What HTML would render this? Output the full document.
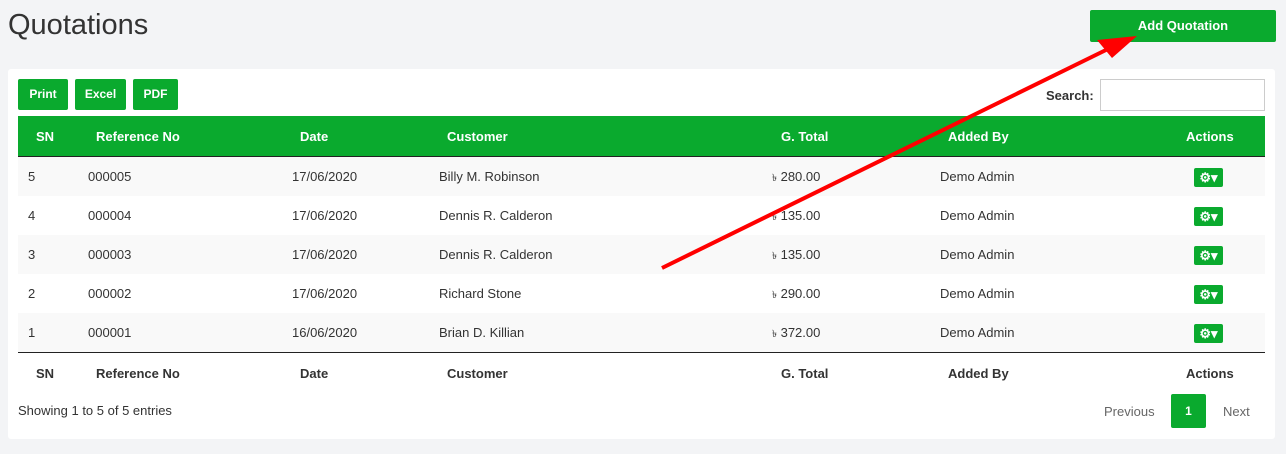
<!DOCTYPE html>
<html><head><style>
body{margin:0;width:1286px;height:454px;background:#f3f4f6;font-family:"Liberation Sans",sans-serif;position:relative;overflow:hidden;color:#333}
.a{position:absolute}
h1{position:absolute;left:8px;top:9px;margin:0;font-weight:normal;font-size:29px;color:#333}
.btn{position:absolute;background:#0aaa2e;color:#fff;font-size:12px;font-weight:bold;text-align:center;border-radius:2px}
.card{position:absolute;left:8px;top:69px;width:1267px;height:370px;background:#fff;border-radius:3px}
.hdr{position:absolute;left:18px;top:116px;width:1247px;height:40px;background:#0aaa2e;border-bottom:1px solid #222}
.t{position:absolute;font-size:13px;white-space:nowrap;line-height:15px}
.b{font-weight:bold}
.row{position:absolute;left:18px;width:1247px;height:39px}
.gear{position:absolute;left:1194px;width:29px;height:19px;background:#0aaa2e;border-radius:2px;color:#fff;font-size:13px;font-weight:bold;text-align:center;line-height:19px}
.tk{font-size:10px;line-height:10px;vertical-align:0}
</style></head><body>
<h1>Quotations</h1>
<div class="btn" style="left:1090px;top:10px;width:186px;height:32px;line-height:32px;font-size:13px">Add Quotation</div>
<div class="card"></div>
<div class="btn" style="left:18px;top:79px;width:50px;height:31px;line-height:31px">Print</div>
<div class="btn" style="left:75px;top:79px;width:51px;height:31px;line-height:31px">Excel</div>
<div class="btn" style="left:133px;top:79px;width:45px;height:31px;line-height:31px">PDF</div>
<div class="t b" style="left:1046px;top:88px">Search:</div>
<div class="a" style="left:1100px;top:79px;width:163px;height:30px;border:1px solid #ccc;background:#fff"></div>
<div class="hdr"></div>
<div class="row" style="top:157px;background:#f9f9f9"></div>
<div class="row" style="top:235px;background:#f9f9f9"></div>
<div class="row" style="top:313px;background:#f9f9f9"></div>
<div class="a" style="left:18px;top:352px;width:1247px;height:1px;background:#222"></div>
<div style="color:#fff">
<div class="t b" style="left:36px;top:129px">SN</div><div class="t b" style="left:96px;top:129px">Reference No</div><div class="t b" style="left:300px;top:129px">Date</div><div class="t b" style="left:447px;top:129px">Customer</div><div class="t b" style="left:781px;top:129px">G. Total</div><div class="t b" style="left:948px;top:129px">Added By</div><div class="t b" style="left:1186px;top:129px">Actions</div>
</div>
<div class="t b" style="left:36px;top:366px">SN</div><div class="t b" style="left:96px;top:366px">Reference No</div><div class="t b" style="left:300px;top:366px">Date</div><div class="t b" style="left:447px;top:366px">Customer</div><div class="t b" style="left:781px;top:366px">G. Total</div><div class="t b" style="left:948px;top:366px">Added By</div><div class="t b" style="left:1186px;top:366px">Actions</div>

<div class="t" style="left:28px;top:169px">5</div><div class="t" style="left:88px;top:169px">000005</div><div class="t" style="left:292px;top:169px">17/06/2020</div><div class="t" style="left:439px;top:169px">Billy M. Robinson</div><div class="t" style="left:772px;top:169px"><span class="tk">৳</span> 280.00</div><div class="t" style="left:940px;top:169px">Demo Admin</div><div class="gear" style="top:168px">⚙▾</div>
<div class="t" style="left:28px;top:208px">4</div><div class="t" style="left:88px;top:208px">000004</div><div class="t" style="left:292px;top:208px">17/06/2020</div><div class="t" style="left:439px;top:208px">Dennis R. Calderon</div><div class="t" style="left:772px;top:208px"><span class="tk">৳</span> 135.00</div><div class="t" style="left:940px;top:208px">Demo Admin</div><div class="gear" style="top:207px">⚙▾</div>
<div class="t" style="left:28px;top:247px">3</div><div class="t" style="left:88px;top:247px">000003</div><div class="t" style="left:292px;top:247px">17/06/2020</div><div class="t" style="left:439px;top:247px">Dennis R. Calderon</div><div class="t" style="left:772px;top:247px"><span class="tk">৳</span> 135.00</div><div class="t" style="left:940px;top:247px">Demo Admin</div><div class="gear" style="top:246px">⚙▾</div>
<div class="t" style="left:28px;top:286px">2</div><div class="t" style="left:88px;top:286px">000002</div><div class="t" style="left:292px;top:286px">17/06/2020</div><div class="t" style="left:439px;top:286px">Richard Stone</div><div class="t" style="left:772px;top:286px"><span class="tk">৳</span> 290.00</div><div class="t" style="left:940px;top:286px">Demo Admin</div><div class="gear" style="top:285px">⚙▾</div>
<div class="t" style="left:28px;top:325px">1</div><div class="t" style="left:88px;top:325px">000001</div><div class="t" style="left:292px;top:325px">16/06/2020</div><div class="t" style="left:439px;top:325px">Brian D. Killian</div><div class="t" style="left:772px;top:325px"><span class="tk">৳</span> 372.00</div><div class="t" style="left:940px;top:325px">Demo Admin</div><div class="gear" style="top:324px">⚙▾</div>

<div class="t" style="left:18px;top:403px">Showing 1 to 5 of 5 entries</div>
<div class="t" style="left:1104px;top:404px;color:#666">Previous</div>
<div class="btn" style="left:1171px;top:394px;width:35px;height:34px;line-height:34px">1</div>
<div class="t" style="left:1223px;top:404px;color:#666">Next</div>

<svg class="a" style="left:0;top:0" width="1286" height="454">
<line x1="662" y1="268" x2="1110" y2="48" stroke="#f00" stroke-width="4"/>
<polygon points="1137,36 1097,40 1112,58" fill="#f00"/>
</svg>
</body></html>
